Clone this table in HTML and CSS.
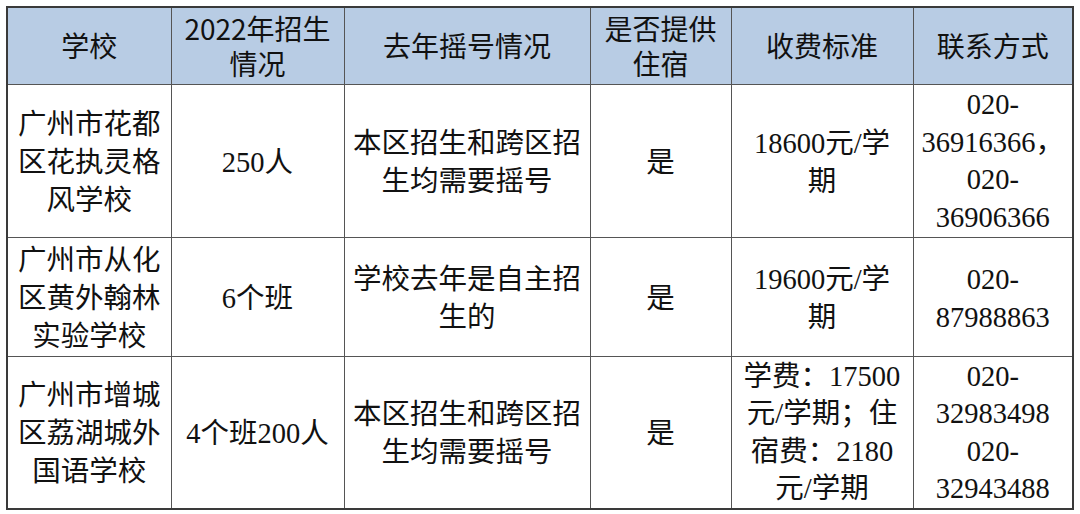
FILE: index.html
```html
<!DOCTYPE html>
<html lang="zh-CN">
<head>
<meta charset="utf-8">
<link rel="stylesheet" href="styles.css">
</head>
<body>
<table class="schools">
  <colgroup>
    <col class="c1"><col class="c2"><col class="c3"><col class="c4"><col class="c5"><col class="c6">
  </colgroup>
  <thead>
    <tr class="head">
      <th>学校</th>
      <th><span class="hl">2022年招生</span><span class="hl">情况</span></th>
      <th>去年摇号情况</th>
      <th><span class="hl">是否提供</span><span class="hl">住宿</span></th>
      <th>收费标准</th>
      <th>联系方式</th>
    </tr>
  </thead>
  <tbody>
    <tr class="r1">
      <td class="off">广州市花都<br>区花执灵格<br>风学校</td>
      <td class="off">250人</td>
      <td class="off">本区招生和跨区招<br>生均需要摇号</td>
      <td class="off">是</td>
      <td class="off">18600元/学<br>期</td>
      <td class="tight">020-<br>36916366，<br>020-<br>36906366</td>
    </tr>
    <tr class="r2">
      <td class="off">广州市从化<br>区黄外翰林<br>实验学校</td>
      <td class="off">6个班</td>
      <td class="off">学校去年是自主招<br>生的</td>
      <td class="off">是</td>
      <td class="off">19600元/学<br>期</td>
      <td class="off">020-<br>87988863</td>
    </tr>
    <tr class="r3">
      <td class="off">广州市增城<br>区荔湖城外<br>国语学校</td>
      <td class="off">4个班200人</td>
      <td class="off">本区招生和跨区招<br>生均需要摇号</td>
      <td class="off">是</td>
      <td class="tight">学费：17500<br>元/学期；住<br>宿费：2180<br>元/学期</td>
      <td class="tight">020-<br>32983498<br>020-<br>32943488</td>
    </tr>
  </tbody>
</table>
</body>
</html>
```

FILE: styles.css
```css
html, body {
  margin: 0;
  padding: 0;
  background: #ffffff;
}
body {
  padding: 6px 0 0 6px;
}
.schools {
  border-collapse: collapse;
  table-layout: fixed;
  width: 1067px;
  border: 2px solid #3a3a3a;
  color: #111;
}
.c1 { width: 164px; }
.c2 { width: 173px; }
.c3 { width: 246px; }
.c4 { width: 141px; }
.c5 { width: 182px; }
.c6 { width: 160px; }

.schools th,
.schools td {
  border: 1px solid #555;
  padding: 0;
  text-align: center;
  vertical-align: middle;
  white-space: nowrap;
  overflow: hidden;
}
.schools th {
  background: #b8cce4;
  font-family: "Noto Sans CJK SC", "Liberation Sans", sans-serif;
  font-weight: 400;
  font-size: 28px;
  line-height: 35px;
}
.hl {
  display: block;
  height: 35px;
  line-height: 35px;
}
.schools td {
  font-family: "Liberation Serif", "Noto Sans CJK SC", serif;
  font-size: 28.5px;
  line-height: 38px;
}
.schools td.off {
  padding-top: 4px;
}
.schools td.tight {
  line-height: 37.5px;
  padding-top: 1px;
}
.head { height: 77px; }
.r1 { height: 153px; }
.r2 { height: 116px; }
.r3 { height: 153px; }
```
